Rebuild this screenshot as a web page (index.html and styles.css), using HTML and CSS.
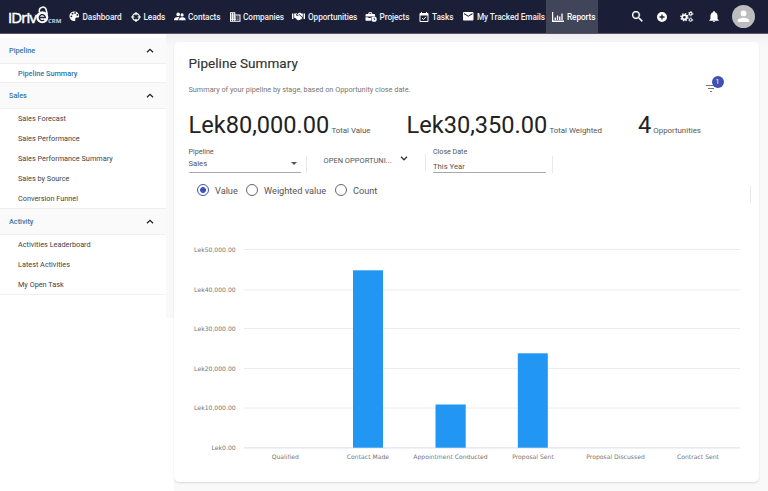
FILE: index.html
```html
<!DOCTYPE html>
<html lang="en">
<head>
<meta charset="utf-8">
<title>Pipeline Summary</title>
<link rel="stylesheet" href="styles.css">
</head>
<body>
<header class="topbar">
  <div class="logo">
    <span class="logo-name">IDriv</span>
    <svg class="logo-e" viewBox="0 0 13 18"><path d="M3.300 6V4.300a3.500 3.500 0 0 1 6.800-.8l1.200 5" fill="none" stroke="#fff" stroke-width="1.500"/><circle cx="6.300" cy="11.300" r="6" fill="#fff"/><path d="M3.500 11.500h5.800a3 3 0 1 0-1.100 2.400" fill="none" stroke="#1a1f37" stroke-width="1.300"/></svg>
    <span class="logo-crm">CRM</span>
  </div>
  <nav class="nav">
    <a class="nav-item dashboard"><svg viewBox="0 0 24 24"><path fill-rule="evenodd" d="M12 1a11 11 0 1 0 0 22c2 0 3-1 2.500-3-.8-2.500 0-5 3-5H21c1.400 0 2-1.500 2-3A11 11 0 0 0 12 1zM5.500 14a2 2 0 1 1 0-4 2 2 0 0 1 0 4zm2.500-6a2 2 0 1 1 0-4 2 2 0 0 1 0 4zm6-1.500a2 2 0 1 1 0-4 2 2 0 0 1 0 4zm5 4.500a2 2 0 1 1 0-4 2 2 0 0 1 0 4z"/></svg><span>Dashboard</span></a>
    <a class="nav-item leads"><svg viewBox="0 0 24 24"><path d="M12 0v8M12 16v8M0 12h8M16 12h8" stroke="#fff" stroke-width="2.800"/><circle cx="12" cy="12" r="8" fill="none" stroke="#fff" stroke-width="2.800"/></svg><span>Leads</span></a>
    <a class="nav-item contacts"><svg viewBox="1 4 22 16"><path d="M16.500 12a3 3 0 1 0 0-6 3 3 0 0 0 0 6zM9 11.500a3.500 3.500 0 1 0 0-7 3.500 3.500 0 0 0 0 7zm7.500 2c-1.800 0-5.500 1-5.500 3V19h12v-2.500c0-2-3.700-3-6.500-3zM9 13c-2.700 0-8 1.300-8 4v2h8.500v-2.500c0-1 .4-2.400 2.400-3.300A14 14 0 0 0 9 13z"/></svg><span>Contacts</span></a>
    <a class="nav-item companies"><svg viewBox="2 3 20 18"><path d="M12 7V3H2v18h20V7H12zM6 19H4v-2h2v2zm0-4H4v-2h2v2zm0-4H4V9h2v2zm0-4H4V5h2v2zm4 12H8v-2h2v2zm0-4H8v-2h2v2zm0-4H8V9h2v2zm0-4H8V5h2v2zm10 12h-8v-2h2v-2h-2v-2h2v-2h-2V9h8v10zm-2-8h-2v2h2v-2zm0 4h-2v2h2v-2z"/></svg><span>Companies</span></a>
    <a class="nav-item opportunities"><svg viewBox="0 0 26 18"><path d="M0 3h2.800v11H0zM23.200 3H26v11h-2.800zM4.300 3H8l2.500-1.300L8 6c1 2.200 3 2.200 4.800.7l1.700-.9 6 5.700c1 1-.5 2.500-1.700 1.500.5 1.500-1 2.500-2.300 1.500 0 1.500-1.600 2-2.600 1-.6 1.500-2 1.400-3 .5L6.500 12l-2.200-.5zM12 3l2-1.500h3L19 3h2.700v7.500L15 4.500l-3 1.300c-1 .6-2 .5-2 0z"/></svg><span>Opportunities</span></a>
    <a class="nav-item projects"><svg viewBox="0 0 25 20"><path fill-rule="evenodd" d="M7 4V1.500C7 .5 8 0 9 0h4c1 0 2 .5 2 1.500V4h3c2 0 3 1 3 3v2H1V7c0-2 1-3 3-3zm2 0h4V2H9zM1 10.500h6V12h5v-1.500h2a7 7 0 0 0-1 7.500H3c-1 0-2-1-2-2z"/><path fill-rule="evenodd" d="M19 9a5.500 5.500 0 1 0 0 11 5.500 5.500 0 0 0 0-11zm-.8 2.500h1.600v2.700l1.800 1.500-1 1.200-2.400-2z"/></svg><span>Projects</span></a>
    <a class="nav-item tasks"><svg viewBox="3 1 18 20"><path d="M19 3h-1V1h-2v2H8V1H6v2H5a2 2 0 0 0-2 2v14c0 1.100.9 2 2 2h14a2 2 0 0 0 2-2V5a2 2 0 0 0-2-2zm0 16H5V8h14v11z"/><path d="M8 13l3 3 5-5.500" fill="none" stroke="#fff" stroke-width="2"/></svg><span>Tasks</span></a>
    <a class="nav-item emails"><svg viewBox="2 4 20 16"><path d="M20 4H4a2 2 0 0 0-2 2v12c0 1.100.9 2 2 2h16a2 2 0 0 0 2-2V6a2 2 0 0 0-2-2zm0 4-8 5-8-5V6l8 5 8-5v2z"/></svg><span>My Tracked Emails</span></a>
    <a class="nav-item reports"><svg viewBox="0 0 24 20"><path d="M1.200 0v18.500H24M6.500 16v-5M11 16V7M15.500 16V9M20 16V3" fill="none" stroke="#fff" stroke-width="2.600"/></svg><span>Reports</span></a>
  </nav>
  <div class="tools">
    <svg class="search" viewBox="3 3 18 18"><path d="M15.500 14h-.8l-.3-.3A6.500 6.500 0 1 0 13.700 14.400l.3.300v.8l5 5 1.500-1.500-5-5zm-6 0a4.500 4.500 0 1 1 0-9 4.500 4.500 0 0 1 0 9z" stroke="#fff" stroke-width=".5"/></svg>
    <svg class="add" viewBox="2 2 20 20"><path d="M12 2a10 10 0 1 0 0 20 10 10 0 0 0 0-20zm5 11.300h-3.700V17h-2.600v-3.700H7v-2.600h3.700V7h2.600v3.700H17z"/></svg>
    <svg class="gears" viewBox="0 0 26 22"><g fill="none" stroke="#fff"><circle cx="8.500" cy="12" r="4.300" stroke-width="3.400"/><circle cx="8.500" cy="12" r="6.800" stroke-width="2.600" stroke-dasharray="2.800 2.540"/><circle cx="20.500" cy="5.200" r="2.600" stroke-width="2"/><circle cx="20.500" cy="5.200" r="4.200" stroke-width="1.700" stroke-dasharray="2.200 2.200"/><circle cx="20.500" cy="17" r="2.400" stroke-width="1.900"/><circle cx="20.500" cy="17" r="3.900" stroke-width="1.500" stroke-dasharray="2.040 2.040"/></g></svg>
    <svg class="bell" viewBox="4 2.500 16 19.500"><path d="M12 22a2 2 0 0 0 2-2h-4c0 1.100.9 2 2 2zm6-6v-5c0-3.100-1.600-5.600-4.500-6.300V4a1.500 1.500 0 0 0-3 0v.7C7.600 5.400 6 7.900 6 11v5l-2 2v1h16v-1z"/></svg>
    <svg class="avatar" viewBox="0 0 24 24"><circle cx="12" cy="12" r="12" fill="#bdbdbd"/><circle cx="12" cy="8.800" r="3"/><path d="M6 17.800v-1.500c0-2 4-3 6-3s6 1 6 3v1.500z"/></svg>
  </div>
</header>
<div class="page">
  <aside class="sidebar">
    <div class="group"><span>Pipeline</span><svg viewBox="0 0 8 5"><path d="M1 4.300 4 1.300 7 4.300"/></svg></div>
    <div class="links single"><a class="active">Pipeline Summary</a></div>
    <div class="group"><span>Sales</span><svg viewBox="0 0 8 5"><path d="M1 4.300 4 1.300 7 4.300"/></svg></div>
    <div class="links"><a>Sales Forecast</a><a>Sales Performance</a><a>Sales Performance Summary</a><a>Sales by Source</a><a>Conversion Funnel</a></div>
    <div class="group"><span>Activity</span><svg viewBox="0 0 8 5"><path d="M1 4.300 4 1.300 7 4.300"/></svg></div>
    <div class="links last"><a>Activities Leaderboard</a><a>Latest Activities</a><a>My Open Task</a></div>
  </aside>
  <main class="content">
    <section class="card">
      <div class="card-head">
        <div>
          <h1>Pipeline Summary</h1>
          <p>Summary of your pipeline by stage, based on Opportunity close date.</p>
        </div>
        <div class="filter"><svg viewBox="0 0 10 8"><path d="M0 1.500h10M2 4.500h6M4 7.500h2"/></svg><span class="badge">1</span></div>
      </div>
      <div class="totals">
        <div class="total"><b>Lek80,000.00</b><span>Total Value</span></div>
        <div class="total"><b>Lek30,350.00</b><span>Total Weighted</span></div>
        <div class="total"><b>4</b><span>Opportunities</span></div>
      </div>
      <div class="filters">
        <div class="field pipeline"><label>Pipeline</label><div class="value"><span>Sales</span><i class="caret"></i></div></div>
        <i class="rule"></i>
        <div class="status"><span>OPEN OPPORTUNI...</span><svg viewBox="0 0 8 5"><path d="M1 .8 4 3.800 7 .8"/></svg></div>
        <i class="rule high"></i>
        <div class="field date"><label>Close Date</label><div class="value"><span>This Year</span></div></div>
        <i class="rule"></i>
      </div>
      <div class="modes">
        <span class="radio on"></span><span class="m-value">Value</span>
        <span class="radio"></span><span class="m-weighted">Weighted value</span>
        <span class="radio"></span><span class="m-count">Count</span>
        <i class="rule end"></i>
      </div>
      <svg class="chart" viewBox="174 230 585 240">
        <g class="grid"><path d="M244 249.500h496M244 290h496M244 328.500h496M244 368.500h496M244 408h496"/></g>
        <path class="axis" d="M244 447.800h496"/>
        <g class="bars"><rect x="353" y="270.300" width="30" height="177.400"/><rect x="435.500" y="404.500" width="30.200" height="43.200"/><rect x="517.800" y="353.300" width="30" height="94.400"/></g>
        <g class="ylabels"><text x="235.700" y="252.300">Lek50,000.00</text><text x="235.700" y="292">Lek40,000.00</text><text x="235.700" y="331">Lek30,000.00</text><text x="235.700" y="370.700">Lek20,000.00</text><text x="235.700" y="410.200">Lek10,000.00</text><text x="235.700" y="450">Lek0.00</text></g>
        <g class="xlabels"><text x="285.300" y="458.500">Qualified</text><text x="368" y="458.500">Contact Made</text><text x="450.500" y="458.500">Appointment Conducted</text><text x="533" y="458.500">Proposal Sent</text><text x="615.500" y="458.500">Proposal Discussed</text><text x="698" y="458.500">Contract Sent</text></g>
      </svg>
    </section>
  </main>
</div>
</body>
</html>
```

FILE: styles.css
```css
* { box-sizing: border-box; }
body { margin: 0; width: 768px; height: 491px; overflow: hidden; background: #fff; font-family: Roboto, "Liberation Sans", sans-serif; color: #444; }
svg { display: block; flex: none; fill: #fff; }

.topbar { display: flex; height: 34px; background: #1a1f37; border-bottom: 1px solid #5d5469; color: #fff; }
.logo { display: flex; width: 69px; padding-left: 8px; align-items: flex-start; }
.logo-name { width: 28px; font: 400 15px/18px "Open Sans", sans-serif; letter-spacing: -.9px; padding-top: 8px; -webkit-text-stroke: .5px #fff; }
.logo-e { width: 13px; height: 18px; margin-top: 6px; }
.logo-crm { font: 700 6px/8px "Open Sans", sans-serif; padding-top: 17px; margin-left: -1px; color: #cfd1d8; }
.nav { display: grid; grid-template-columns: 62px 43px 56px 62px 73px 54px 44px 82.500px 52px; }
.nav-item { display: flex; align-items: center; height: 33px; font-size: 8.250px; letter-spacing: -.09px; font-weight: 500; white-space: nowrap; color: #eeeef1; }
.nav-item svg { margin-right: auto; }
.nav-item span { width: var(--text); margin-right: var(--end); }
.dashboard { --text: 38px; --end: 10.500px; }
.dashboard svg { width: 10.500px; height: 10.500px; }
.leads { --text: 22px; --end: 8.500px; }
.leads svg { width: 10px; height: 10px; }
.contacts { --text: 32px; --end: 10px; }
.contacts svg { width: 11.500px; height: 9px; }
.companies { --text: 40px; --end: 9px; }
.companies svg { width: 10.500px; height: 10px; }
.opportunities { --text: 48px; --end: 9px; }
.opportunities svg { width: 13px; height: 9px; }
.projects { --text: 30px; --end: 9.500px; }
.projects svg { width: 12px; height: 10px; }
.tasks { --text: 21px; --end: 10px; }
.tasks svg { width: 10px; height: 10px; }
.emails { --text: 66px; --end: 2.500px; }
.emails svg { width: 10.500px; height: 8.500px; }
.reports { --text: 28px; --end: 2.500px; padding-left: 6.500px; background: #41455a; color: #fff; }
.reports svg { width: 12px; height: 10px; }
.tools { display: flex; align-items: center; margin-left: 34.500px; height: 33px; }
.search { width: 11px; height: 11px; }
.add { width: 10px; height: 10px; margin-left: 14px; }
.gears { width: 13.500px; height: 11.500px; margin-left: 13px; }
.bell { width: 10px; height: 11.500px; margin-left: 15px; }
.avatar { width: 23px; height: 23px; margin-left: 13px; }

.page { display: flex; align-items: flex-start; }
.sidebar { width: 166px; height: 284px; padding-top: 4px; background: #fff; }
.group { display: flex; align-items: center; justify-content: space-between; height: 26px; padding: 0 12px 1px 9px; background: #fafafa; border-bottom: 1px solid #f0f0f0; color: #3077ad; font-size: 7.300px; font-weight: 500; }
.group svg { width: 8px; height: 5px; fill: none; stroke: #222; stroke-width: 1.300; }
.links { display: flex; flex-direction: column; height: 100px; padding-left: 18px; border-bottom: 1px solid #f0f0f0; font-size: 7.300px; color: #444; }
.links a { height: 20px; line-height: 20px; flex: none; }
.links.single { height: 19px; }
.links.single a { line-height: 19px; height: 18px; }
.links.last { height: 60px; }
.links.last a { line-height: 19px; }
.links .active { color: #3077ad; font-weight: 500; }

.content { width: 602px; height: 457px; padding: 8px 9px 0 8px; background: linear-gradient(#fff, #fff) 0 284px / 8px 173px no-repeat, linear-gradient(#f0eff1, #f9f9f9 12px) #f9f9f9; }
.card { height: 440px; padding: 0 14.500px; background: #fff; border-radius: 5px; box-shadow: 0 1px 2px rgba(0, 0, 0, .13); }
.card-head { display: flex; justify-content: space-between; height: 67px; }
h1 { margin: 13px 0 0; font-size: 13.500px; line-height: 16px; font-weight: 400; color: #333; -webkit-text-stroke: .15px #333; letter-spacing: .05px; }
p { margin: 14px 0 0; font-size: 7.300px; line-height: 10px; color: #777; }
.filter { position: relative; width: 38.500px; padding-top: 42px; }
.filter svg { width: 10px; height: 8px; stroke: #777; stroke-width: 1; }
.badge { position: absolute; left: 5.500px; top: 34px; width: 12px; height: 12px; border-radius: 50%; background: #3f51b5; color: #fff; font-size: 7px; line-height: 12px; text-align: center; }
.totals { display: grid; grid-template-columns: 218px 231.500px 1fr; height: 36px; }
.total { display: flex; align-items: baseline; white-space: nowrap; }
.total b { font-size: 23.600px; line-height: 32px; font-weight: 400; color: #222; margin-right: 2px; }
.total span { font-size: 7.900px; color: #555; }
.filters { display: flex; height: 30px; color: #555; }
.field label { display: block; height: 12px; font-size: 7.100px; line-height: 13px; }
.field .value { display: flex; align-items: center; justify-content: space-between; height: 16px; border-bottom: 1px solid #aaa; font-size: 7.700px; }
.pipeline { width: 112px; }
.pipeline .value { padding-right: 4px; padding-bottom: 2px; }
.date { width: 113px; }
.date .value { padding-top: 3px; }
.caret { border: 3px solid transparent; border-top-color: #555; border-bottom: 0; }
.rule { width: 1px; height: 17px; background: #e8e8e8; margin: 11px 0 0 5.500px; }
.status { display: flex; width: 101px; padding: 0 0 5px 16.500px; height: 30px; align-items: center; margin-top: 3px; font-size: 7.500px; white-space: nowrap; }
.status span { width: 76px; }
.status svg { width: 8px; height: 5px; margin-top: -5px; fill: none; stroke: #333; stroke-width: 1.300; }
.rule.high { height: 17px; margin: 9px 7px 0 17px; }
.modes { display: flex; align-items: center; height: 30px; padding-left: 8.500px; font-size: 9.200px; color: #555; }
.radio { width: 12px; height: 12px; border: 1.200px solid #666; border-radius: 50%; margin-right: 6px; }
.radio.on { border-color: #3f51b5; background: radial-gradient(#3f51b5 0 2.600px, transparent 3.200px); }
.m-value { width: 31px; }
.m-weighted { width: 71px; }
.rule.end { margin: 8px -6px 0 auto; }
.chart { width: 585px; height: 240px; margin: 25px 0 0 -14.500px; font-family: "DejaVu Sans", sans-serif; font-size: 6.100px; }
.chart text { fill: #777; }
.grid path { stroke: #ececec; stroke-width: 1; }
.axis { stroke: #dfe3f3; stroke-width: 1.200; }
.bars rect { fill: #2196f3; }
.ylabels { text-anchor: end; }
.xlabels { text-anchor: middle; }
```
